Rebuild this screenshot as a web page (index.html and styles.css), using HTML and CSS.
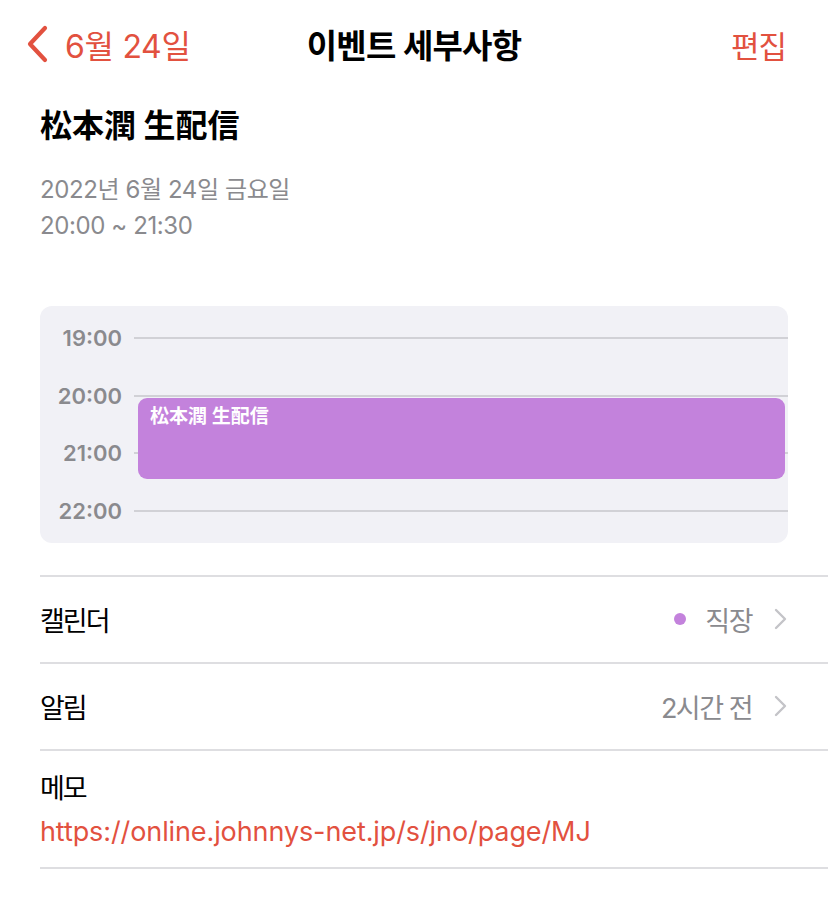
FILE: index.html
```html
<!DOCTYPE html>
<html lang="ko">
<head>
  <meta charset="UTF-8" />
  <title>이벤트 세부사항</title>
  <link rel="stylesheet" href="styles.css">
</head>
<body>
  <header class="nav">
    <a class="nav-back" href="#">
      <svg class="back-icon" width="24" height="38" viewBox="0 0 24 38">
        <path d="M19 3 L4 19 L19 35" fill="none" stroke="currentColor" stroke-width="4.2" stroke-linecap="round" stroke-linejoin="round"/>
      </svg>
      <span>6월 24일</span>
    </a>
    <h1 class="nav-title">이벤트 세부사항</h1>
    <a class="nav-edit" href="#">편집</a>
  </header>

  <main class="content">
    <section class="event-head">
      <h2 class="event-title" lang="ja">松本潤 生配信</h2>
      <p class="event-date">2022년 6월 24일 금요일</p>
      <p class="event-date">20:00 ~ 21:30</p>
    </section>

    <section class="day-view">
      <div class="hour-row"><span class="hour-label">19:00</span><span class="hour-line"></span></div>
      <div class="hour-row"><span class="hour-label">20:00</span><span class="hour-line"></span></div>
      <div class="hour-row"><span class="hour-label">21:00</span><span class="hour-line"></span></div>
      <div class="hour-row"><span class="hour-label">22:00</span><span class="hour-line"></span></div>
      <div class="event-block" lang="ja">松本潤 生配信</div>
    </section>

    <ul class="detail-list">
      <li class="detail-row">
        <span class="detail-label">캘린더</span>
        <span class="detail-value">
          <span class="cal-dot"></span>
          <span>직장</span>
          <svg class="row-chevron" width="13" height="22" viewBox="0 0 13 22">
            <path d="M2 2 L11 11 L2 20" fill="none" stroke="currentColor" stroke-width="2.4" stroke-linecap="round" stroke-linejoin="round"/>
          </svg>
        </span>
      </li>
      <li class="detail-row">
        <span class="detail-label">알림</span>
        <span class="detail-value">
          <span>2시간 전</span>
          <svg class="row-chevron" width="13" height="22" viewBox="0 0 13 22">
            <path d="M2 2 L11 11 L2 20" fill="none" stroke="currentColor" stroke-width="2.4" stroke-linecap="round" stroke-linejoin="round"/>
          </svg>
        </span>
      </li>
      <li class="memo-row">
        <span class="detail-label">메모</span>
        <a class="memo-link" href="#">https://online.johnnys-net.jp/s/jno/page/MJ</a>
      </li>
    </ul>
  </main>
</body>
</html>
```

FILE: styles.css
```css
:root {
  --tint: #e2513f;
  --text: #000;
  --muted: #8a8a8e;
  --sep: #dedee1;
  --day-bg: #f1f1f6;
  --day-line: #d1d1d6;
  --event: #c382dc;
  --chevron: #c4c4c8;
}

* {
  box-sizing: border-box;
}

body {
  margin: 0;
  background: #fff;
  color: var(--text);
  font-family: "Inter", "Noto Sans CJK KR", "Noto Sans CJK JP", sans-serif;
}

a {
  text-decoration: none;
  color: var(--tint);
}

/* top navigation */
.nav {
  display: grid;
  grid-template-columns: 1fr auto 1fr;
  align-items: center;
  height: 88px;
  padding: 0 26px;
}

.nav-back {
  display: flex;
  align-items: center;
  gap: 15px;
  font-size: 32px;
  letter-spacing: -0.3px;
}

.back-icon {
  display: block;
}

.nav-title {
  margin: 0;
  font-size: 33px;
  font-weight: 600;
  letter-spacing: -0.8px;
}

.nav-edit {
  justify-self: end;
  margin-right: 16px;
  font-size: 31px;
  letter-spacing: -1px;
}

.content {
  padding-left: 40px;
}

/* event title + time */
.event-head {
  padding-top: 18px;
}

.event-title {
  margin: 0 0 26px;
  font-family: "Inter", "Noto Sans CJK JP", sans-serif;
  font-size: 32px;
  line-height: 40px;
  font-weight: 700;
}

.event-date {
  margin: 0;
  color: var(--muted);
  font-size: 24px;
  line-height: 36px;
  letter-spacing: -0.4px;
}

/* day preview */
.day-view {
  position: relative;
  margin: 62px 40px 0 0;
  padding: 3px 0;
  background: var(--day-bg);
  border-radius: 12px;
}

.hour-row {
  display: flex;
  align-items: center;
  gap: 12px;
  height: 57.7px;
}

.hour-label {
  width: 82px;
  text-align: right;
  color: var(--muted);
  font-size: 22px;
  font-weight: 600;
}

.hour-line {
  flex: 1;
  height: 2px;
  background: var(--day-line);
}

.event-block {
  position: absolute;
  top: 92px;
  left: 98px;
  right: 3px;
  height: 81px;
  padding: 6px 12px;
  background: var(--event);
  border-radius: 9px;
  color: #fff;
  font-family: "Inter", "Noto Sans CJK JP", sans-serif;
  font-size: 19px;
  line-height: 26px;
  font-weight: 600;
}

/* detail rows */
.detail-list {
  list-style: none;
  margin: 32px 0 0;
  padding: 0;
}

.detail-list li {
  border-top: 2px solid var(--sep);
}

.detail-list li:last-child {
  border-bottom: 2px solid var(--sep);
}

.detail-row {
  display: flex;
  align-items: center;
  justify-content: space-between;
  height: 87px;
  padding-right: 41px;
}

.detail-label {
  font-size: 27px;
  letter-spacing: -2px;
}

.detail-value {
  display: flex;
  align-items: center;
  color: var(--muted);
  font-size: 27px;
  letter-spacing: -1.5px;
}

.cal-dot {
  width: 12px;
  height: 12px;
  margin-right: 19px;
  border-radius: 50%;
  background: var(--event);
}

.row-chevron {
  display: block;
  margin-left: 22px;
  color: var(--chevron);
}

.memo-row {
  display: flex;
  flex-direction: column;
  padding: 20px 0 17px;
  line-height: 36px;
}

.memo-link {
  font-size: 27px;
  letter-spacing: -0.1px;
  margin-top: 7px;
}
```
